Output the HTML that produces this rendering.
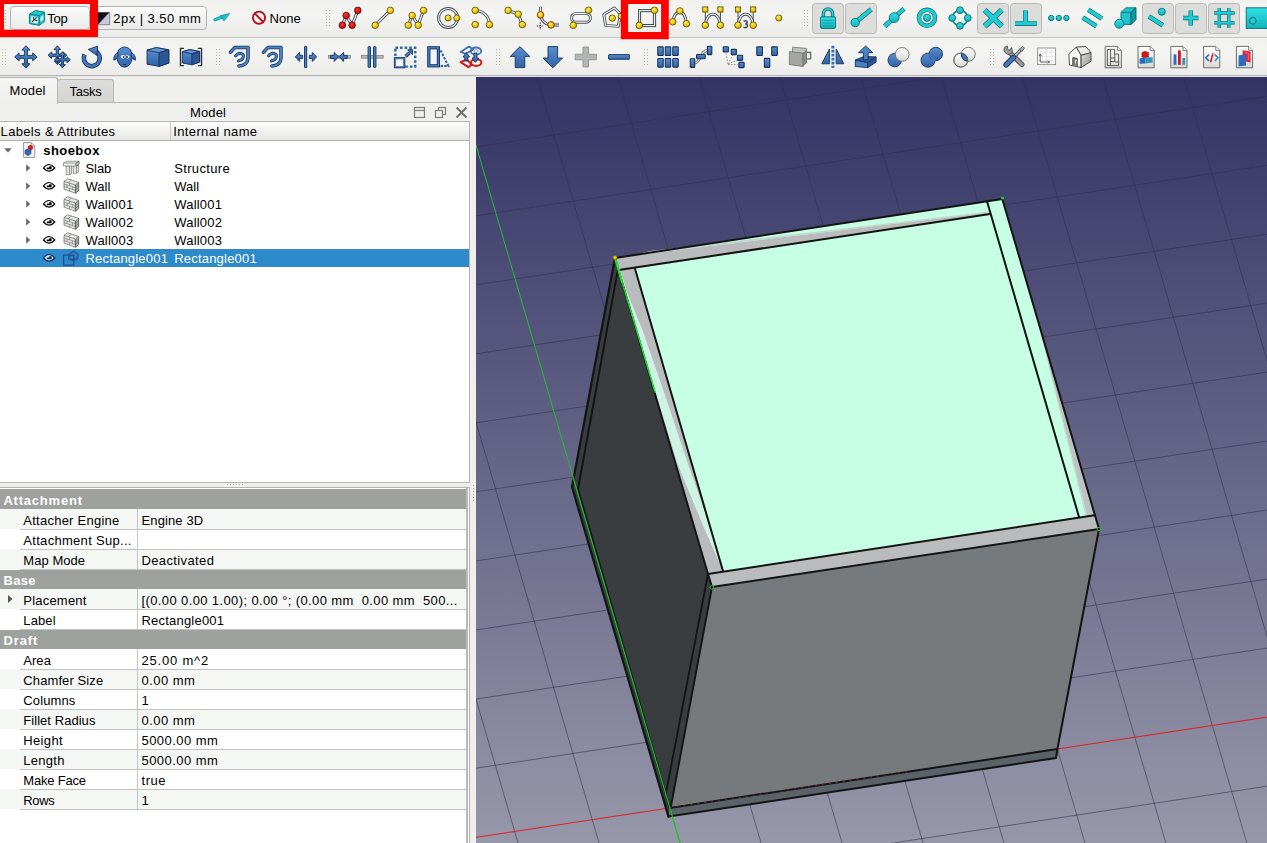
<!DOCTYPE html>
<html><head><meta charset="utf-8"><title>FreeCAD</title>
<style>
html,body{margin:0;padding:0;}
body{width:1267px;height:843px;overflow:hidden;position:relative;background:#eff0ee;font-family:"Liberation Sans",sans-serif;font-size:13px;color:#000;}
.a{position:absolute;}
.t{position:absolute;white-space:pre;line-height:1;height:13px;}
svg{position:absolute;overflow:visible;}

</style></head>
<body>
<div class="a" style="left:0;top:0;width:1267px;height:37px;background:linear-gradient(#f1f2f0,#f4f5f3 40%,#ebece9)"></div>
<div class="a" style="left:0;top:38px;width:1267px;height:37px;background:linear-gradient(#f1f2f0,#f4f5f3 40%,#ebece9)"></div>
<div class="a" style="left:0;top:37px;width:1267px;height:1px;background:#c6c6c4"></div>
<div class="a" style="left:0;top:75px;width:1267px;height:1px;background:#b4b4b2"></div>
<div class="a" style="left:0;top:76px;width:1267px;height:1px;background:#e4e4e2"></div>
<div class="a" style="left:2px;top:10px;width:1px;height:1px;background:#b0b0b0"></div><div class="a" style="left:5px;top:10px;width:1px;height:1px;background:#b0b0b0"></div><div class="a" style="left:2px;top:13px;width:1px;height:1px;background:#b0b0b0"></div><div class="a" style="left:5px;top:13px;width:1px;height:1px;background:#b0b0b0"></div><div class="a" style="left:2px;top:16px;width:1px;height:1px;background:#b0b0b0"></div><div class="a" style="left:5px;top:16px;width:1px;height:1px;background:#b0b0b0"></div><div class="a" style="left:2px;top:19px;width:1px;height:1px;background:#b0b0b0"></div><div class="a" style="left:5px;top:19px;width:1px;height:1px;background:#b0b0b0"></div><div class="a" style="left:2px;top:22px;width:1px;height:1px;background:#b0b0b0"></div><div class="a" style="left:5px;top:22px;width:1px;height:1px;background:#b0b0b0"></div><div class="a" style="left:2px;top:25px;width:1px;height:1px;background:#b0b0b0"></div><div class="a" style="left:5px;top:25px;width:1px;height:1px;background:#b0b0b0"></div>
<div class="a" style="left:326px;top:10px;width:1px;height:1px;background:#b0b0b0"></div><div class="a" style="left:329px;top:10px;width:1px;height:1px;background:#b0b0b0"></div><div class="a" style="left:326px;top:13px;width:1px;height:1px;background:#b0b0b0"></div><div class="a" style="left:329px;top:13px;width:1px;height:1px;background:#b0b0b0"></div><div class="a" style="left:326px;top:16px;width:1px;height:1px;background:#b0b0b0"></div><div class="a" style="left:329px;top:16px;width:1px;height:1px;background:#b0b0b0"></div><div class="a" style="left:326px;top:19px;width:1px;height:1px;background:#b0b0b0"></div><div class="a" style="left:329px;top:19px;width:1px;height:1px;background:#b0b0b0"></div><div class="a" style="left:326px;top:22px;width:1px;height:1px;background:#b0b0b0"></div><div class="a" style="left:329px;top:22px;width:1px;height:1px;background:#b0b0b0"></div><div class="a" style="left:326px;top:25px;width:1px;height:1px;background:#b0b0b0"></div><div class="a" style="left:329px;top:25px;width:1px;height:1px;background:#b0b0b0"></div>
<div class="a" style="left:804px;top:10px;width:1px;height:1px;background:#b0b0b0"></div><div class="a" style="left:807px;top:10px;width:1px;height:1px;background:#b0b0b0"></div><div class="a" style="left:804px;top:13px;width:1px;height:1px;background:#b0b0b0"></div><div class="a" style="left:807px;top:13px;width:1px;height:1px;background:#b0b0b0"></div><div class="a" style="left:804px;top:16px;width:1px;height:1px;background:#b0b0b0"></div><div class="a" style="left:807px;top:16px;width:1px;height:1px;background:#b0b0b0"></div><div class="a" style="left:804px;top:19px;width:1px;height:1px;background:#b0b0b0"></div><div class="a" style="left:807px;top:19px;width:1px;height:1px;background:#b0b0b0"></div><div class="a" style="left:804px;top:22px;width:1px;height:1px;background:#b0b0b0"></div><div class="a" style="left:807px;top:22px;width:1px;height:1px;background:#b0b0b0"></div><div class="a" style="left:804px;top:25px;width:1px;height:1px;background:#b0b0b0"></div><div class="a" style="left:807px;top:25px;width:1px;height:1px;background:#b0b0b0"></div>
<div class="a" style="left:2px;top:49px;width:1px;height:1px;background:#b0b0b0"></div><div class="a" style="left:5px;top:49px;width:1px;height:1px;background:#b0b0b0"></div><div class="a" style="left:2px;top:52px;width:1px;height:1px;background:#b0b0b0"></div><div class="a" style="left:5px;top:52px;width:1px;height:1px;background:#b0b0b0"></div><div class="a" style="left:2px;top:55px;width:1px;height:1px;background:#b0b0b0"></div><div class="a" style="left:5px;top:55px;width:1px;height:1px;background:#b0b0b0"></div><div class="a" style="left:2px;top:58px;width:1px;height:1px;background:#b0b0b0"></div><div class="a" style="left:5px;top:58px;width:1px;height:1px;background:#b0b0b0"></div><div class="a" style="left:2px;top:61px;width:1px;height:1px;background:#b0b0b0"></div><div class="a" style="left:5px;top:61px;width:1px;height:1px;background:#b0b0b0"></div><div class="a" style="left:2px;top:64px;width:1px;height:1px;background:#b0b0b0"></div><div class="a" style="left:5px;top:64px;width:1px;height:1px;background:#b0b0b0"></div>
<div class="a" style="left:216px;top:49px;width:1px;height:1px;background:#b0b0b0"></div><div class="a" style="left:219px;top:49px;width:1px;height:1px;background:#b0b0b0"></div><div class="a" style="left:216px;top:52px;width:1px;height:1px;background:#b0b0b0"></div><div class="a" style="left:219px;top:52px;width:1px;height:1px;background:#b0b0b0"></div><div class="a" style="left:216px;top:55px;width:1px;height:1px;background:#b0b0b0"></div><div class="a" style="left:219px;top:55px;width:1px;height:1px;background:#b0b0b0"></div><div class="a" style="left:216px;top:58px;width:1px;height:1px;background:#b0b0b0"></div><div class="a" style="left:219px;top:58px;width:1px;height:1px;background:#b0b0b0"></div><div class="a" style="left:216px;top:61px;width:1px;height:1px;background:#b0b0b0"></div><div class="a" style="left:219px;top:61px;width:1px;height:1px;background:#b0b0b0"></div><div class="a" style="left:216px;top:64px;width:1px;height:1px;background:#b0b0b0"></div><div class="a" style="left:219px;top:64px;width:1px;height:1px;background:#b0b0b0"></div>
<div class="a" style="left:496px;top:49px;width:1px;height:1px;background:#b0b0b0"></div><div class="a" style="left:499px;top:49px;width:1px;height:1px;background:#b0b0b0"></div><div class="a" style="left:496px;top:52px;width:1px;height:1px;background:#b0b0b0"></div><div class="a" style="left:499px;top:52px;width:1px;height:1px;background:#b0b0b0"></div><div class="a" style="left:496px;top:55px;width:1px;height:1px;background:#b0b0b0"></div><div class="a" style="left:499px;top:55px;width:1px;height:1px;background:#b0b0b0"></div><div class="a" style="left:496px;top:58px;width:1px;height:1px;background:#b0b0b0"></div><div class="a" style="left:499px;top:58px;width:1px;height:1px;background:#b0b0b0"></div><div class="a" style="left:496px;top:61px;width:1px;height:1px;background:#b0b0b0"></div><div class="a" style="left:499px;top:61px;width:1px;height:1px;background:#b0b0b0"></div><div class="a" style="left:496px;top:64px;width:1px;height:1px;background:#b0b0b0"></div><div class="a" style="left:499px;top:64px;width:1px;height:1px;background:#b0b0b0"></div>
<div class="a" style="left:644px;top:49px;width:1px;height:1px;background:#b0b0b0"></div><div class="a" style="left:647px;top:49px;width:1px;height:1px;background:#b0b0b0"></div><div class="a" style="left:644px;top:52px;width:1px;height:1px;background:#b0b0b0"></div><div class="a" style="left:647px;top:52px;width:1px;height:1px;background:#b0b0b0"></div><div class="a" style="left:644px;top:55px;width:1px;height:1px;background:#b0b0b0"></div><div class="a" style="left:647px;top:55px;width:1px;height:1px;background:#b0b0b0"></div><div class="a" style="left:644px;top:58px;width:1px;height:1px;background:#b0b0b0"></div><div class="a" style="left:647px;top:58px;width:1px;height:1px;background:#b0b0b0"></div><div class="a" style="left:644px;top:61px;width:1px;height:1px;background:#b0b0b0"></div><div class="a" style="left:647px;top:61px;width:1px;height:1px;background:#b0b0b0"></div><div class="a" style="left:644px;top:64px;width:1px;height:1px;background:#b0b0b0"></div><div class="a" style="left:647px;top:64px;width:1px;height:1px;background:#b0b0b0"></div>
<div class="a" style="left:990px;top:49px;width:1px;height:1px;background:#b0b0b0"></div><div class="a" style="left:993px;top:49px;width:1px;height:1px;background:#b0b0b0"></div><div class="a" style="left:990px;top:52px;width:1px;height:1px;background:#b0b0b0"></div><div class="a" style="left:993px;top:52px;width:1px;height:1px;background:#b0b0b0"></div><div class="a" style="left:990px;top:55px;width:1px;height:1px;background:#b0b0b0"></div><div class="a" style="left:993px;top:55px;width:1px;height:1px;background:#b0b0b0"></div><div class="a" style="left:990px;top:58px;width:1px;height:1px;background:#b0b0b0"></div><div class="a" style="left:993px;top:58px;width:1px;height:1px;background:#b0b0b0"></div><div class="a" style="left:990px;top:61px;width:1px;height:1px;background:#b0b0b0"></div><div class="a" style="left:993px;top:61px;width:1px;height:1px;background:#b0b0b0"></div><div class="a" style="left:990px;top:64px;width:1px;height:1px;background:#b0b0b0"></div><div class="a" style="left:993px;top:64px;width:1px;height:1px;background:#b0b0b0"></div>
<div class="a" style="left:57px;top:102px;width:413px;height:1px;background:#b8b8b6"></div>
<div class="a" style="left:-1px;top:77px;width:57px;height:26px;border:1px solid #b8b8b6;border-bottom:none;border-radius:0 3px 0 0;background:linear-gradient(#f5f6f4,#eff0ee);box-sizing:content-box"></div>
<div class="a" style="left:57px;top:79px;width:55px;height:22px;border:1px solid #b8b8b6;border-bottom:none;border-radius:3px 3px 0 0;background:linear-gradient(#dcdcda,#d4d4d2);box-sizing:content-box"></div>
<div class="t" style="left:9.5px;top:83.6px;font-size:13px;letter-spacing:0.125px;color:#000;">Model</div>
<div class="t" style="left:69.5px;top:84.5px;font-size:13px;letter-spacing:-0.216px;color:#000;">Tasks</div>
<div class="t" style="left:190.0px;top:105.7px;font-size:13px;letter-spacing:0.125px;color:#000;">Model</div>
<svg style="left:412px;top:105px" width="58" height="16" viewBox="412 105 58 16">
<rect x="414.5" y="107.5" width="10" height="10" fill="none" stroke="#7d7d7d" stroke-width="1.2"/>
<line x1="414.5" y1="110.5" x2="424.5" y2="110.5" stroke="#7d7d7d" stroke-width="1.2"/>
<rect x="438.5" y="107.5" width="7" height="7" fill="none" stroke="#7d7d7d" stroke-width="1.2"/>
<rect x="435.5" y="110.5" width="7" height="7" fill="#efefef" stroke="#7d7d7d" stroke-width="1.2"/>
<path d="M456.5 107.5L466.5 117.5M466.5 107.5L456.5 117.5" stroke="#6e6e6e" stroke-width="1.8"/>
</svg>
<div class="a" style="left:-1px;top:121px;width:469px;height:360px;border:1px solid #b4b4b2;background:#fff;box-sizing:content-box"></div>
<div class="a" style="left:0;top:122px;width:469px;height:18px;background:linear-gradient(#fdfdfd,#e6e6e4);border-bottom:1px solid #b0b0ae"></div>
<div class="a" style="left:170px;top:122px;width:1px;height:18px;background:#c8c8c6"></div>
<div class="t" style="left:0.6px;top:124.7px;font-size:13px;letter-spacing:0.340px;color:#000;">Labels &amp; Attributes</div>
<div class="t" style="left:173.3px;top:124.7px;font-size:13px;letter-spacing:0.356px;color:#000;">Internal name</div>
<div class="a" style="left:0;top:249px;width:469px;height:18px;background:#2d8acb"></div>
<div class="t" style="left:43.2px;top:144.0px;font-size:13px;letter-spacing:0.458px;color:#000;font-weight:bold;">shoebox</div>
<div class="t" style="left:85.4px;top:162.0px;font-size:13px;letter-spacing:-0.023px;color:#000;">Slab</div>
<div class="t" style="left:174.2px;top:162.0px;font-size:13px;letter-spacing:0.344px;color:#000;">Structure</div>
<div class="t" style="left:85.4px;top:180.0px;font-size:13px;letter-spacing:0.078px;color:#000;">Wall</div>
<div class="t" style="left:174.2px;top:180.0px;font-size:13px;letter-spacing:0.078px;color:#000;">Wall</div>
<div class="t" style="left:85.4px;top:198.0px;font-size:13px;letter-spacing:0.219px;color:#000;">Wall001</div>
<div class="t" style="left:174.2px;top:198.0px;font-size:13px;letter-spacing:0.219px;color:#000;">Wall001</div>
<div class="t" style="left:85.4px;top:216.0px;font-size:13px;letter-spacing:0.219px;color:#000;">Wall002</div>
<div class="t" style="left:174.2px;top:216.0px;font-size:13px;letter-spacing:0.219px;color:#000;">Wall002</div>
<div class="t" style="left:85.4px;top:234.0px;font-size:13px;letter-spacing:0.219px;color:#000;">Wall003</div>
<div class="t" style="left:174.2px;top:234.0px;font-size:13px;letter-spacing:0.219px;color:#000;">Wall003</div>
<div class="t" style="left:85.4px;top:252.0px;font-size:13px;letter-spacing:0.206px;color:#fff;">Rectangle001</div>
<div class="t" style="left:174.2px;top:252.0px;font-size:13px;letter-spacing:0.206px;color:#fff;">Rectangle001</div>
<div class="a" style="left:227px;top:484px;width:1px;height:1px;background:#a8a8a8"></div>
<div class="a" style="left:230px;top:484px;width:1px;height:1px;background:#a8a8a8"></div>
<div class="a" style="left:233px;top:484px;width:1px;height:1px;background:#a8a8a8"></div>
<div class="a" style="left:236px;top:484px;width:1px;height:1px;background:#a8a8a8"></div>
<div class="a" style="left:239px;top:484px;width:1px;height:1px;background:#a8a8a8"></div>
<div class="a" style="left:242px;top:484px;width:1px;height:1px;background:#a8a8a8"></div>
<div class="a" style="left:473px;top:485px;width:1px;height:1px;background:#a8a8a8"></div>
<div class="a" style="left:473px;top:488px;width:1px;height:1px;background:#a8a8a8"></div>
<div class="a" style="left:473px;top:491px;width:1px;height:1px;background:#a8a8a8"></div>
<div class="a" style="left:473px;top:494px;width:1px;height:1px;background:#a8a8a8"></div>
<div class="a" style="left:473px;top:497px;width:1px;height:1px;background:#a8a8a8"></div>
<div class="a" style="left:473px;top:500px;width:1px;height:1px;background:#a8a8a8"></div>
<div class="a" style="left:-1px;top:487px;width:469px;height:360px;border:1px solid #b4b4b2;background:#fff;box-sizing:content-box"></div>
<div class="a" style="left:466px;top:488px;width:2px;height:360px;background:#b8bab8"></div>
<div class="a" style="left:468px;top:488px;width:1px;height:360px;background:#fbfbfb"></div>
<div class="a" style="left:0;top:489.0px;width:466px;height:20.0px;background:#9fa19e"></div>
<div class="t" style="left:3.4px;top:494.0px;font-size:13px;letter-spacing:0.791px;color:#fff;font-weight:bold;">Attachment</div>
<div class="a" style="left:0;top:509.0px;width:466px;height:20px;background:#f5f7f5"></div>
<div class="a" style="left:137px;top:509.0px;width:1px;height:20px;background:#c6c6c4"></div>
<div class="t" style="left:23.3px;top:514.0px;font-size:13px;letter-spacing:0.248px;color:#000;">Attacher Engine</div>
<div class="t" style="left:141.5px;top:514.0px;font-size:13px;letter-spacing:0.122px;color:#000;">Engine 3D</div>
<div class="a" style="left:0;top:529.0px;width:466px;height:20px;background:#ffffff"></div>
<div class="a" style="left:137px;top:529.0px;width:1px;height:20px;background:#c6c6c4"></div>
<div class="t" style="left:23.3px;top:534.0px;font-size:13px;letter-spacing:0.301px;color:#000;">Attachment Sup...</div>
<div class="a" style="left:0;top:549.0px;width:466px;height:20px;background:#f5f7f5"></div>
<div class="a" style="left:137px;top:549.0px;width:1px;height:20px;background:#c6c6c4"></div>
<div class="t" style="left:23.3px;top:554.0px;font-size:13px;letter-spacing:0.055px;color:#000;">Map Mode</div>
<div class="t" style="left:141.5px;top:554.0px;font-size:13px;letter-spacing:0.375px;color:#000;">Deactivated</div>
<div class="a" style="left:0;top:570.0px;width:466px;height:19.0px;background:#9fa19e"></div>
<div class="t" style="left:3.4px;top:574.0px;font-size:13px;letter-spacing:0.355px;color:#fff;font-weight:bold;">Base</div>
<div class="a" style="left:0;top:589.0px;width:466px;height:20px;background:#f5f7f5"></div>
<div class="a" style="left:137px;top:589.0px;width:1px;height:20px;background:#c6c6c4"></div>
<div class="t" style="left:23.3px;top:594.0px;font-size:13px;letter-spacing:0.207px;color:#000;">Placement</div>
<div class="t" style="left:141.5px;top:594.0px;font-size:13px;letter-spacing:0.382px;color:#000;">[(0.00 0.00 1.00); 0.00 °; (0.00 mm&nbsp; 0.00 mm&nbsp; 500...</div>
<svg style="left:6px;top:594.0px" width="8" height="10"><path d="M2 1L6.5 5L2 9Z" fill="#555"/></svg>
<div class="a" style="left:0;top:609.0px;width:466px;height:20px;background:#ffffff"></div>
<div class="a" style="left:137px;top:609.0px;width:1px;height:20px;background:#c6c6c4"></div>
<div class="t" style="left:23.3px;top:614.0px;font-size:13px;letter-spacing:0.113px;color:#000;">Label</div>
<div class="t" style="left:141.5px;top:614.0px;font-size:13px;letter-spacing:0.206px;color:#000;">Rectangle001</div>
<div class="a" style="left:0;top:630.0px;width:466px;height:19.0px;background:#9fa19e"></div>
<div class="t" style="left:3.4px;top:634.0px;font-size:13px;letter-spacing:0.919px;color:#fff;font-weight:bold;">Draft</div>
<div class="a" style="left:0;top:649.0px;width:466px;height:20px;background:#ffffff"></div>
<div class="a" style="left:137px;top:649.0px;width:1px;height:20px;background:#c6c6c4"></div>
<div class="t" style="left:23.3px;top:654.0px;font-size:13px;letter-spacing:0.039px;color:#000;">Area</div>
<div class="t" style="left:141.5px;top:654.0px;font-size:13px;letter-spacing:0.807px;color:#000;">25.00 m^2</div>
<div class="a" style="left:0;top:669.0px;width:466px;height:20px;background:#f5f7f5"></div>
<div class="a" style="left:137px;top:669.0px;width:1px;height:20px;background:#c6c6c4"></div>
<div class="t" style="left:23.3px;top:674.0px;font-size:13px;letter-spacing:0.105px;color:#000;">Chamfer Size</div>
<div class="t" style="left:141.5px;top:674.0px;font-size:13px;letter-spacing:0.478px;color:#000;">0.00 mm</div>
<div class="a" style="left:0;top:689.0px;width:466px;height:20px;background:#ffffff"></div>
<div class="a" style="left:137px;top:689.0px;width:1px;height:20px;background:#c6c6c4"></div>
<div class="t" style="left:23.3px;top:694.0px;font-size:13px;letter-spacing:0.127px;color:#000;">Columns</div>
<div class="t" style="left:141.5px;top:694.0px;font-size:13px;letter-spacing:0.406px;color:#000;">1</div>
<div class="a" style="left:0;top:709.0px;width:466px;height:20px;background:#f5f7f5"></div>
<div class="a" style="left:137px;top:709.0px;width:1px;height:20px;background:#c6c6c4"></div>
<div class="t" style="left:23.3px;top:714.0px;font-size:13px;letter-spacing:0.048px;color:#000;">Fillet Radius</div>
<div class="t" style="left:141.5px;top:714.0px;font-size:13px;letter-spacing:0.478px;color:#000;">0.00 mm</div>
<div class="a" style="left:0;top:729.0px;width:466px;height:20px;background:#ffffff"></div>
<div class="a" style="left:137px;top:729.0px;width:1px;height:20px;background:#c6c6c4"></div>
<div class="t" style="left:23.3px;top:734.0px;font-size:13px;letter-spacing:0.349px;color:#000;">Height</div>
<div class="t" style="left:141.5px;top:734.0px;font-size:13px;letter-spacing:0.456px;color:#000;">5000.00 mm</div>
<div class="a" style="left:0;top:749.0px;width:466px;height:20px;background:#f5f7f5"></div>
<div class="a" style="left:137px;top:749.0px;width:1px;height:20px;background:#c6c6c4"></div>
<div class="t" style="left:23.3px;top:754.0px;font-size:13px;letter-spacing:0.273px;color:#000;">Length</div>
<div class="t" style="left:141.5px;top:754.0px;font-size:13px;letter-spacing:0.456px;color:#000;">5000.00 mm</div>
<div class="a" style="left:0;top:769.0px;width:466px;height:20px;background:#ffffff"></div>
<div class="a" style="left:137px;top:769.0px;width:1px;height:20px;background:#c6c6c4"></div>
<div class="t" style="left:23.3px;top:774.0px;font-size:13px;letter-spacing:-0.189px;color:#000;">Make Face</div>
<div class="t" style="left:141.5px;top:774.0px;font-size:13px;letter-spacing:0.559px;color:#000;">true</div>
<div class="a" style="left:0;top:789.0px;width:466px;height:20px;background:#f5f7f5"></div>
<div class="a" style="left:137px;top:789.0px;width:1px;height:20px;background:#c6c6c4"></div>
<div class="t" style="left:23.3px;top:794.0px;font-size:13px;letter-spacing:-0.324px;color:#000;">Rows</div>
<div class="t" style="left:141.5px;top:794.0px;font-size:13px;letter-spacing:0.406px;color:#000;">1</div>
<div class="a" style="left:20px;top:529.0px;width:446px;height:1px;background:#c2c2c0"></div>
<div class="a" style="left:20px;top:549.0px;width:446px;height:1px;background:#c2c2c0"></div>
<div class="a" style="left:20px;top:569.0px;width:446px;height:1px;background:#c2c2c0"></div>
<div class="a" style="left:20px;top:609.0px;width:446px;height:1px;background:#c2c2c0"></div>
<div class="a" style="left:20px;top:629.0px;width:446px;height:1px;background:#c2c2c0"></div>
<div class="a" style="left:20px;top:669.0px;width:446px;height:1px;background:#c2c2c0"></div>
<div class="a" style="left:20px;top:689.0px;width:446px;height:1px;background:#c2c2c0"></div>
<div class="a" style="left:20px;top:709.0px;width:446px;height:1px;background:#c2c2c0"></div>
<div class="a" style="left:20px;top:729.0px;width:446px;height:1px;background:#c2c2c0"></div>
<div class="a" style="left:20px;top:749.0px;width:446px;height:1px;background:#c2c2c0"></div>
<div class="a" style="left:20px;top:769.0px;width:446px;height:1px;background:#c2c2c0"></div>
<div class="a" style="left:20px;top:789.0px;width:446px;height:1px;background:#c2c2c0"></div>
<div class="a" style="left:20px;top:809.0px;width:446px;height:1px;background:#c2c2c0"></div>
<svg style="left:0;top:141px" width="120" height="130" viewBox="0 141 120 130">
<path d="M4.2 148.2H11.8L8 152.4Z" fill="#6a6a6a"/>
<path d="M23.6 142.6H31.4L34.8 146V157.4H23.6Z" fill="#f6f6f4" stroke="#8a8c8a" stroke-width="0.9" stroke-linejoin="round"/><path d="M31.4 142.6V146H34.8" fill="#e4e4e2" stroke="#8a8c8a" stroke-width="0.7"/>
<circle cx="30.4" cy="147.6" r="2.6" fill="#e01b24"/><path d="M25 150.2L28.2 148.6L31 150V153.8L28 155.6L25 154Z" fill="#3a6fb4" stroke="#1e4a86" stroke-width="0.6"/><path d="M25 150.2L28 151.6L31 150M28 151.6V155.6" stroke="#1e4a86" stroke-width="0.5" fill="none"/>
<path d="M26.2 164.2L30.2 168L26.2 171.8Z" fill="#6a6a6a"/>
<path d="M43.4 168Q49 161 54.8 168Q49 174.4 43.4 168Z" fill="#fff" stroke="#000" stroke-width="1.2" stroke-linejoin="round"/><path d="M46.8 169.2H51.6V166.2H49.2V167.4H46.8Z" fill="#000"/>
<g stroke="#6a6c6a" stroke-width="0.65" stroke-linejoin="round"><path d="M66.2 166H69.6L71.6 165.4V173.6L69.6 174.8H66.2Z" fill="#e2e4e2"/><path d="M69.6 166V174.8" fill="none"/><path d="M73.2 165.6H76.6L78.6 165V172L76.6 173.2H73.2Z" fill="#e2e4e2"/><path d="M76.6 165.6V173.2" fill="none"/><path d="M63.4 163L66.6 161.2L79 161.2V164L76 166H63.4Z" fill="#f0f2f0"/><path d="M63.4 163H76V166M76 163L79 161.2" fill="none"/><path d="M76 163L79 161.2V164L76 166Z" fill="#b8bab8"/></g>
<path d="M26.2 182.2L30.2 186L26.2 189.8Z" fill="#6a6a6a"/>
<path d="M43.4 186Q49 179 54.8 186Q49 192.4 43.4 186Z" fill="#fff" stroke="#000" stroke-width="1.2" stroke-linejoin="round"/><path d="M46.8 187.2H51.6V184.2H49.2V185.4H46.8Z" fill="#000"/>
<g stroke="#585a58" stroke-width="0.65" stroke-linejoin="round"><path d="M64 181.4L67.6 178.8L78.6 182.4L78.6 190.6L75.4 193.2L64 189.2Z" fill="#e6e8e6"/><path d="M75.4 185L78.6 182.4V190.6L75.4 193.2Z" fill="#aeb0ae"/><path d="M64 181.4L75.4 185V193.2" fill="none"/><path d="M64 184L75.4 187.7M64 186.6L75.4 190.4M69.6 183.2V185.8M67 185V187.6M72.4 186.8V189.4M69.6 188.4V191M75.4 187.7L78.6 185.1M75.4 190.4L78.6 187.8M71.4 180L68.2 182.8" fill="none" stroke-width="0.55"/></g>
<path d="M26.2 200.2L30.2 204L26.2 207.8Z" fill="#6a6a6a"/>
<path d="M43.4 204Q49 197 54.8 204Q49 210.4 43.4 204Z" fill="#fff" stroke="#000" stroke-width="1.2" stroke-linejoin="round"/><path d="M46.8 205.2H51.6V202.2H49.2V203.4H46.8Z" fill="#000"/>
<g stroke="#585a58" stroke-width="0.65" stroke-linejoin="round"><path d="M64 199.4L67.6 196.8L78.6 200.4L78.6 208.6L75.4 211.2L64 207.2Z" fill="#e6e8e6"/><path d="M75.4 203L78.6 200.4V208.6L75.4 211.2Z" fill="#aeb0ae"/><path d="M64 199.4L75.4 203V211.2" fill="none"/><path d="M64 202L75.4 205.7M64 204.6L75.4 208.4M69.6 201.2V203.8M67 203V205.6M72.4 204.8V207.4M69.6 206.4V209M75.4 205.7L78.6 203.1M75.4 208.4L78.6 205.8M71.4 198L68.2 200.8" fill="none" stroke-width="0.55"/></g>
<path d="M26.2 218.2L30.2 222L26.2 225.8Z" fill="#6a6a6a"/>
<path d="M43.4 222Q49 215 54.8 222Q49 228.4 43.4 222Z" fill="#fff" stroke="#000" stroke-width="1.2" stroke-linejoin="round"/><path d="M46.8 223.2H51.6V220.2H49.2V221.4H46.8Z" fill="#000"/>
<g stroke="#585a58" stroke-width="0.65" stroke-linejoin="round"><path d="M64 217.4L67.6 214.8L78.6 218.4L78.6 226.6L75.4 229.2L64 225.2Z" fill="#e6e8e6"/><path d="M75.4 221L78.6 218.4V226.6L75.4 229.2Z" fill="#aeb0ae"/><path d="M64 217.4L75.4 221V229.2" fill="none"/><path d="M64 220L75.4 223.7M64 222.6L75.4 226.4M69.6 219.2V221.8M67 221V223.6M72.4 222.8V225.4M69.6 224.4V227M75.4 223.7L78.6 221.1M75.4 226.4L78.6 223.8M71.4 216L68.2 218.8" fill="none" stroke-width="0.55"/></g>
<path d="M26.2 236.2L30.2 240L26.2 243.8Z" fill="#6a6a6a"/>
<path d="M43.4 240Q49 233 54.8 240Q49 246.4 43.4 240Z" fill="#fff" stroke="#000" stroke-width="1.2" stroke-linejoin="round"/><path d="M46.8 241.2H51.6V238.2H49.2V239.4H46.8Z" fill="#000"/>
<g stroke="#585a58" stroke-width="0.65" stroke-linejoin="round"><path d="M64 235.4L67.6 232.8L78.6 236.4L78.6 244.6L75.4 247.2L64 243.2Z" fill="#e6e8e6"/><path d="M75.4 239L78.6 236.4V244.6L75.4 247.2Z" fill="#aeb0ae"/><path d="M64 235.4L75.4 239V247.2" fill="none"/><path d="M64 238L75.4 241.7M64 240.6L75.4 244.4M69.6 237.2V239.8M67 239V241.6M72.4 240.8V243.4M69.6 242.4V245M75.4 241.7L78.6 239.1M75.4 244.4L78.6 241.8M71.4 234L68.2 236.8" fill="none" stroke-width="0.55"/></g>
<path d="M43.4 258Q49 251 54.8 258Q49 264.4 43.4 258Z" fill="#cfe6f8" stroke="#0c2a52" stroke-width="1.2" stroke-linejoin="round"/><path d="M46.8 259.2H51.6V256.2H49.2V257.4H46.8Z" fill="#0c2a52"/>
<path d="M68.2 254.6L73.8 250.6L78.6 254.2L77.4 259.6L72 260.4Z" fill="none" stroke="#244e94" stroke-width="0.9"/><path d="M69.4 254.8L73.8 251.8L77.4 254.6L76.4 258.6L72.2 259.2" fill="none" stroke="#244e94" stroke-width="0.7"/>
<rect x="63.6" y="255.2" width="10.2" height="10" fill="none" stroke="#244e94" stroke-width="1.3"/><rect x="68.8" y="255.8" width="5" height="4" fill="none" stroke="#244e94" stroke-width="1"/>
</svg>
<svg style="left:476px;top:77px;overflow:hidden" width="791" height="766" viewBox="476 77 791 766">
<defs><linearGradient id="bg" x1="0" y1="0" x2="0" y2="1"><stop offset="0" stop-color="#333365"/><stop offset="1" stop-color="#9797aa"/></linearGradient></defs>
<rect x="476" y="77" width="791" height="766" fill="url(#bg)"/>
<path d="M-264.3 1781.8L2837.5 1306.5M-107.9 1480.3L-685.5 -505.4M-283.6 1715.3L2818.0 1240.4M-30.1 1468.4L-607.8 -517.1M-302.9 1648.8L2798.4 1174.3M47.7 1456.5L-530.2 -528.7M-322.2 1582.4L2778.9 1108.2M125.5 1444.6L-452.6 -540.3M-341.5 1516.0L2759.4 1042.2M203.3 1432.7L-375.0 -551.9M-360.8 1449.5L2739.8 976.1M281.0 1420.8L-297.4 -563.5M-380.1 1383.1L2720.3 910.1M358.7 1409.0L-219.9 -575.1M-399.4 1316.7L2700.8 844.0M436.4 1397.1L-142.3 -586.7M-418.6 1250.4L2681.3 778.0M514.1 1385.2L-64.8 -598.3M-437.9 1184.0L2661.8 712.0M591.8 1373.4L12.7 -609.9M-457.2 1117.7L2642.3 646.0M669.5 1361.5L90.2 -621.5M-476.5 1051.3L2622.8 580.0M747.1 1349.6L167.6 -633.1M-515.0 918.7L2583.8 448.1M902.3 1325.9L322.5 -656.3M-534.2 852.4L2564.3 382.2M979.9 1314.1L399.9 -667.9M-553.5 786.1L2544.8 316.3M1057.5 1302.2L477.3 -679.5M-572.7 719.9L2525.3 250.4M1135.0 1290.4L554.7 -691.1M-592.0 653.6L2505.9 184.5M1212.6 1278.5L632.0 -702.6M-611.2 587.4L2486.4 118.6M1290.1 1266.7L709.4 -714.2M-630.5 521.2L2466.9 52.7M1367.6 1254.8L786.7 -725.8M-649.7 454.9L2447.5 -13.1M1445.0 1243.0L864.0 -737.4M-668.9 388.8L2428.0 -79.0M1522.5 1231.2L941.3 -748.9M-688.1 322.6L2408.6 -144.8M1599.9 1219.3L1018.5 -760.5M-707.4 256.4L2389.1 -210.6M1677.4 1207.5L1095.8 -772.1M-726.6 190.2L2369.7 -276.4M1754.8 1195.7L1173.0 -783.6M-745.8 124.1L2350.2 -342.2M1832.1 1183.8L1250.2 -795.2M-765.0 58.0L2330.8 -408.0M1909.5 1172.0L1327.4 -806.7M-784.2 -8.1L2311.3 -473.7M1986.9 1160.2L1404.6 -818.3M-803.4 -74.2L2291.9 -539.5M2064.2 1148.4L1481.8 -829.8M-822.6 -140.3L2272.5 -605.2M2141.5 1136.6L1558.9 -841.4M-841.8 -206.4L2253.1 -670.9M2218.8 1124.8L1636.0 -852.9M-861.0 -272.5L2233.6 -736.6M2296.1 1113.0L1713.1 -864.5M-880.2 -338.5L2214.2 -802.3M2373.3 1101.1L1790.2 -876.0M-899.4 -404.5L2194.8 -868.0M2450.6 1089.3L1867.3 -887.5" stroke="#30304e" stroke-opacity="0.56" stroke-width="1" fill="none"/>
<path d="M-495.7 985.0L2603.3 514.1" stroke="#e02020" stroke-width="1" fill="none"/>
<path d="M824.7 1337.8L245.1 -644.7" stroke="#20c030" stroke-width="1" fill="none"/>
<polygon points="615.0,258.0 572.0,487.0 668.5,816.6 669.8,807.9 671.3,806.3 712.0,587.0 708.0,574.0" fill="#3a3d40" stroke="none" stroke-width="0" stroke-linejoin="round" />
<polygon points="712.0,587.0 1099.0,529.0 1057.4,749.0 671.3,806.5" fill="#767a7c" stroke="none" stroke-width="0" stroke-linejoin="round" />
<polygon points="669.8,807.9 1057.4,749.0 1056.0,758.0 668.5,816.6" fill="#5c626a" stroke="none" stroke-width="0" stroke-linejoin="round" />
<polygon points="615.0,258.0 1002.3,199.0 1099.0,529.0 712.0,587.0" fill="#c7ffe4" stroke="none" stroke-width="0" stroke-linejoin="round" />
<polygon points="708.0,574.0 1094.5,515.3 1099.0,529.0 712.0,587.0" fill="#b9bbbd" stroke="none" stroke-width="0" stroke-linejoin="round" />
<polygon points="620.4,269.8 635.0,268.7 723.0,571.0 708.0,574.0" fill="#b9bbbd" stroke="none" stroke-width="0" stroke-linejoin="round" />
<polygon points="615.0,258.0 632.0,255.4 989.0,212.6 990.0,214.0 635.0,268.7 620.4,269.8" fill="#b9bbbd" stroke="none" stroke-width="0" stroke-linejoin="round" />
<polygon points="632.0,255.4 989.0,212.6 989.0,211.6 650.0,251.0" fill="#c2d6cf" stroke="none" stroke-width="0" stroke-linejoin="round" />
<polygon points="622.0,269.6 700.0,257.7 640.0,268.0" fill="#d4e6de" stroke="none" stroke-width="0" stroke-linejoin="round" />
<polygon points="1036.0,315.0 1094.5,515.3 1087.2,516.4" fill="#bdc2c3" stroke="none" stroke-width="0" stroke-linejoin="round" />
<polygon points="1036.0,315.0 1087.2,516.4 1085.6,516.6" fill="#c2d9d1" stroke="none" stroke-width="0" stroke-linejoin="round" />
<polygon points="621.5,279.0 658.2,401.0 677.6,464.0 704.0,528.0 719.5,563.0 710.3,527.0 688.0,464.0 666.7,400.0 642.5,330.0" fill="#cdf3e3" stroke="none" stroke-width="0" stroke-linejoin="round" />
<polyline points="615.0,258.0 1002.3,199.0 1099.0,529.0 712.0,587.0" fill="none" stroke="#141414" stroke-width="2" stroke-linecap="round" stroke-linejoin="round" />
<polyline points="615.0,258.0 708.0,574.0" fill="none" stroke="#141414" stroke-width="2" stroke-linecap="round" stroke-linejoin="round" />
<polyline points="708.0,574.0 712.0,587.0" fill="none" stroke="#141414" stroke-width="2" stroke-linecap="round" stroke-linejoin="round" />
<polyline points="620.4,269.8 990.0,214.0" fill="none" stroke="#141414" stroke-width="2" stroke-linecap="round" stroke-linejoin="round" />
<polyline points="987.0,201.3 1079.0,517.0" fill="none" stroke="#141414" stroke-width="2" stroke-linecap="round" stroke-linejoin="round" />
<polyline points="635.0,268.7 723.0,571.0" fill="none" stroke="#141414" stroke-width="2" stroke-linecap="round" stroke-linejoin="round" />
<polyline points="708.0,574.0 1094.5,515.3" fill="none" stroke="#141414" stroke-width="2" stroke-linecap="round" stroke-linejoin="round" />
<polyline points="615.0,258.0 572.0,487.0 668.5,816.6" fill="none" stroke="#141414" stroke-width="2.2" stroke-linecap="round" stroke-linejoin="round" />
<polyline points="617.5,271.6 578.0,489.0 669.8,807.9" fill="none" stroke="#141414" stroke-width="2" stroke-linecap="round" stroke-linejoin="round" />
<polyline points="708.0,574.0 665.8,794.0" fill="none" stroke="#141414" stroke-width="1.8" stroke-linecap="round" stroke-linejoin="round" />
<polyline points="712.0,587.0 671.0,806.0" fill="none" stroke="#141414" stroke-width="1.9" stroke-linecap="round" stroke-linejoin="round" />
<polyline points="1099.0,529.0 1057.4,749.0 1056.0,758.0 668.5,816.6" fill="none" stroke="#141414" stroke-width="2" stroke-linecap="round" stroke-linejoin="round" />
<polyline points="669.8,807.9 1057.4,749.0" fill="none" stroke="#141414" stroke-width="2" stroke-linecap="round" stroke-linejoin="round" />
<polyline points="669.8,807.9 910.0,771.3" fill="none" stroke="#b83030" stroke-width="0.9"  stroke-linejoin="round" stroke-dasharray="1.6 5.4" stroke-opacity="0.8" stroke-linecap="butt"/>
<polyline points="572.5,475.2 669.8,807.9 681.4,847.6" fill="none" stroke="#20c030" stroke-width="1.2" stroke-linecap="round" stroke-linejoin="round" />
<polyline points="615.0,258.0 655.0,392.0" fill="none" stroke="#22dd33" stroke-width="1.6" stroke-linecap="round" stroke-linejoin="round" stroke-dasharray="3 1.5"/>
<polyline points="615.0,258.0 622.0,282.0" fill="none" stroke="#22dd33" stroke-width="2" stroke-linecap="round" stroke-linejoin="round" />
<circle cx="615" cy="257.5" r="2" fill="#f0c800" stroke="#7a6a00" stroke-width="0.6"/>
<circle cx="1002.5999999999999" cy="198" r="1.6" fill="#20d030"/>
<circle cx="1099" cy="529" r="1.8" fill="none" stroke="#20c030" stroke-width="1"/>
<circle cx="711.7" cy="587.4" r="1.8" fill="none" stroke="#20c030" stroke-width="1"/>
</svg>
<svg style="left:0;top:0" width="1267" height="76" viewBox="0 0 1267 76">
<defs>
<radialGradient id="yg" cx="0.4" cy="0.35" r="0.7"><stop offset="0" stop-color="#fff06a"/><stop offset="0.55" stop-color="#ecc80e"/><stop offset="1" stop-color="#c4a000"/></radialGradient>
<radialGradient id="rg" cx="0.4" cy="0.35" r="0.7"><stop offset="0" stop-color="#f63a3a"/><stop offset="1" stop-color="#c00000"/></radialGradient>
<linearGradient id="tg" x1="0" y1="0" x2="0" y2="1"><stop offset="0" stop-color="#30dfe4"/><stop offset="1" stop-color="#12b4bc"/></linearGradient>
<linearGradient id="bl" x1="0" y1="0" x2="0" y2="1"><stop offset="0" stop-color="#5a8fd0"/><stop offset="1" stop-color="#2f62a6"/></linearGradient>
<linearGradient id="btn" x1="0" y1="0" x2="0" y2="1"><stop offset="0" stop-color="#fbfbfb"/><stop offset="1" stop-color="#e9e9e7"/></linearGradient>
<linearGradient id="docg" x1="0" y1="0" x2="0" y2="1"><stop offset="0" stop-color="#ffffff"/><stop offset="1" stop-color="#d8d8d6"/></linearGradient>
</defs>
<rect x="10.5" y="6.5" width="79" height="23" rx="3" fill="url(#btn)" stroke="#b2b2b0"/>
<g stroke="#0c7e86" stroke-width="1" stroke-linejoin="round">
<path d="M29.4 14.2L35.4 10.5L44.6 12.2V21.2L39.2 25.4L29.4 23.6Z" fill="#22c8d0"/>
<path d="M29.4 14.2L39.2 15.6L44.6 12.2M39.2 15.6V25.4" fill="none"/>
</g>
<path d="M31.3 16.3L37.7 17.2V23.4L31.3 22.4Z" fill="#fafafa"/>
<path d="M40.6 17.2L43.2 15.2V19.6L40.6 21.8Z" fill="#eefafa"/>
<path d="M32.4 21.6Q33.6 20.6 34.4 19.4L33.4 17.6M34.4 19.4L36.8 20.8M35.6 18.2L36.6 17.8" stroke="#1a2a2a" stroke-width="1.2" fill="none" stroke-linecap="round"/>
<rect x="90.5" y="6.5" width="116" height="23" rx="3" fill="url(#btn)" stroke="#b2b2b0"/>
<path d="M98 12.2H109.7L98 24.7Z" fill="#111"/><path d="M109.7 12.2V24.7H98Z" fill="#c6cadc" stroke="#6a6e80" stroke-width="0.8"/>
<path d="M215 19.7L222.4 16.8" stroke="#0d8f98" stroke-width="3.2" stroke-linecap="round"/><path d="M215 19.7L222.4 16.8" stroke="#22c6cf" stroke-width="2" stroke-linecap="round"/><path d="M220.6 15.6L229.6 13.6L224 20.9Z" fill="#1fc0c9" stroke="#0d8f98" stroke-width="0.8" stroke-linejoin="round"/>
<circle cx="259" cy="17.7" r="6.1" fill="none" stroke="#b8101a" stroke-width="1.9"/><path d="M254.7 13.4L263.3 22" stroke="#b8101a" stroke-width="1.9"/>
<path d="M342.4 25.2L346.2 15.5L352.1 25.2L357.8 10.4" fill="none" stroke="#414a54" stroke-width="3.0" stroke-linecap="butt" stroke-linejoin="round"/><path d="M342.4 25.2L346.2 15.5L352.1 25.2L357.8 10.4" fill="none" stroke="#f6f6f4" stroke-width="1.3" stroke-linecap="butt" stroke-linejoin="round"/>
<circle cx="357.8" cy="10.4" r="3.3" fill="url(#rg)" stroke="#5a0000" stroke-width="0.8"/>
<circle cx="346.2" cy="15.5" r="3.3" fill="url(#rg)" stroke="#5a0000" stroke-width="0.8"/>
<circle cx="342.4" cy="25.2" r="3.3" fill="url(#rg)" stroke="#5a0000" stroke-width="0.8"/>
<circle cx="352.1" cy="25.2" r="3.3" fill="url(#rg)" stroke="#5a0000" stroke-width="0.8"/>
<path d="M375.2 25.2L390.3 10.4" fill="none" stroke="#414a54" stroke-width="3.0" stroke-linecap="butt" stroke-linejoin="round"/><path d="M375.2 25.2L390.3 10.4" fill="none" stroke="#f6f6f4" stroke-width="1.3" stroke-linecap="butt" stroke-linejoin="round"/>
<circle cx="390.3" cy="10.4" r="3.3" fill="url(#yg)" stroke="#5c4c00" stroke-width="0.8"/>
<circle cx="375.2" cy="25.2" r="3.3" fill="url(#yg)" stroke="#5c4c00" stroke-width="0.8"/>
<path d="M408.3 25.2L412.1 15.5L418.2 25.2L423.5 10.4" fill="none" stroke="#414a54" stroke-width="3.0" stroke-linecap="butt" stroke-linejoin="round"/><path d="M408.3 25.2L412.1 15.5L418.2 25.2L423.5 10.4" fill="none" stroke="#f6f6f4" stroke-width="1.3" stroke-linecap="butt" stroke-linejoin="round"/>
<circle cx="423.5" cy="10.4" r="3.3" fill="url(#yg)" stroke="#5c4c00" stroke-width="0.8"/>
<circle cx="412.1" cy="15.5" r="3.3" fill="url(#yg)" stroke="#5c4c00" stroke-width="0.8"/>
<circle cx="408.3" cy="25.2" r="3.3" fill="url(#yg)" stroke="#5c4c00" stroke-width="0.8"/>
<circle cx="418.2" cy="25.2" r="3.3" fill="url(#yg)" stroke="#5c4c00" stroke-width="0.8"/>
<circle cx="448.1" cy="18" r="9.5" fill="none" stroke="#414a54" stroke-width="3"/><circle cx="448.1" cy="18" r="9.5" fill="none" stroke="#f4f4f2" stroke-width="1.2"/>
<circle cx="448.1" cy="18" r="3.1" fill="url(#yg)" stroke="#5c4c00" stroke-width="0.8"/>
<circle cx="456.8" cy="18" r="3.1" fill="url(#yg)" stroke="#5c4c00" stroke-width="0.8"/>
<path d="M475.2 10.4A14.2 14.2 0 0 1 489.4 24.6" fill="none" stroke="#414a54" stroke-width="3.0" stroke-linecap="butt" stroke-linejoin="round"/><path d="M475.2 10.4A14.2 14.2 0 0 1 489.4 24.6" fill="none" stroke="#f6f6f4" stroke-width="1.3" stroke-linecap="butt" stroke-linejoin="round"/>
<circle cx="475.2" cy="10.4" r="3.3" fill="url(#yg)" stroke="#5c4c00" stroke-width="0.8"/>
<circle cx="475.2" cy="24.6" r="3.3" fill="url(#yg)" stroke="#5c4c00" stroke-width="0.8"/>
<circle cx="489.4" cy="24.6" r="3.3" fill="url(#yg)" stroke="#5c4c00" stroke-width="0.8"/>
<path d="M508.1 10.4L518.2 14.2L522.3 24.6" fill="none" stroke="#414a54" stroke-width="3.0" stroke-linecap="butt" stroke-linejoin="round"/><path d="M508.1 10.4L518.2 14.2L522.3 24.6" fill="none" stroke="#f6f6f4" stroke-width="1.3" stroke-linecap="butt" stroke-linejoin="round"/>
<circle cx="508.1" cy="10.4" r="3.3" fill="url(#yg)" stroke="#5c4c00" stroke-width="0.8"/>
<circle cx="518.2" cy="14.2" r="3.3" fill="url(#yg)" stroke="#5c4c00" stroke-width="0.8"/>
<circle cx="522.3" cy="24.6" r="3.3" fill="url(#yg)" stroke="#5c4c00" stroke-width="0.8"/>
<path d="M540.6 6.8V14.8Q541.6 23.8 551 25H559" fill="none" stroke="#414a54" stroke-width="2.9" stroke-linecap="butt" stroke-linejoin="round"/><path d="M540.6 6.8V14.8Q541.6 23.8 551 25H559" fill="none" stroke="#f6f6f4" stroke-width="1.2" stroke-linecap="butt" stroke-linejoin="round"/>
<path d="M540.2 22.4V29.4M536.8 26H543.8" stroke="#333" stroke-width="1.2" stroke-dasharray="1.4 0.9"/>
<circle cx="540.5" cy="14.9" r="3.3" fill="url(#yg)" stroke="#8a2a10" stroke-width="0.9"/><circle cx="551" cy="24.9" r="3.3" fill="url(#yg)" stroke="#8a2a10" stroke-width="0.9"/>
<rect x="571.6" y="13.6" width="18.8" height="8.6" rx="4.3" fill="none" stroke="#414a54" stroke-width="2.9"/><rect x="571.6" y="13.6" width="18.8" height="8.6" rx="4.3" fill="none" stroke="#f6f6f4" stroke-width="1.2"/>
<circle cx="588.5" cy="10.3" r="3.3" fill="url(#yg)" stroke="#5c4c00" stroke-width="0.8"/>
<circle cx="573.3" cy="25.3" r="3.3" fill="url(#yg)" stroke="#5c4c00" stroke-width="0.8"/>
<path d="M614.3 8L620.6 14.2L618.2 26.4L605.6 25.4L603.8 14.4Z" fill="none" stroke="#414a54" stroke-width="2.9" stroke-linecap="butt" stroke-linejoin="round"/><path d="M614.3 8L620.6 14.2L618.2 26.4L605.6 25.4L603.8 14.4Z" fill="none" stroke="#f6f6f4" stroke-width="1.2" stroke-linecap="butt" stroke-linejoin="round"/>
<circle cx="612.3" cy="18.1" r="3.2" fill="url(#yg)" stroke="#5c4c00" stroke-width="0.8"/>
<circle cx="621.2" cy="16.2" r="3.1" fill="url(#yg)" stroke="#5c4c00" stroke-width="0.8"/>
<rect x="638.6" y="9.6" width="17" height="17" fill="none" stroke="#414a54" stroke-width="1"/><rect x="640.6" y="11.7" width="12.8" height="12.8" fill="none" stroke="#414a54" stroke-width="1"/>
<circle cx="654.5" cy="10.3" r="3.3" fill="url(#yg)" stroke="#5c4c00" stroke-width="0.8"/>
<circle cx="639.3" cy="25.4" r="3.3" fill="url(#yg)" stroke="#5c4c00" stroke-width="0.8"/>
<path d="M672.7 21.8Q674 13.4 679.9 11Q685.5 13.4 686.5 23.7" fill="none" stroke="#414a54" stroke-width="3.0" stroke-linecap="butt" stroke-linejoin="round"/><path d="M672.7 21.8Q674 13.4 679.9 11Q685.5 13.4 686.5 23.7" fill="none" stroke="#f6f6f4" stroke-width="1.3" stroke-linecap="butt" stroke-linejoin="round"/>
<circle cx="679.9" cy="11" r="3.3" fill="url(#yg)" stroke="#5c4c00" stroke-width="0.8"/>
<circle cx="672.7" cy="21.8" r="3.3" fill="url(#yg)" stroke="#5c4c00" stroke-width="0.8"/>
<circle cx="686.5" cy="23.7" r="3.3" fill="url(#yg)" stroke="#5c4c00" stroke-width="0.8"/>
<path d="M705.3 9.5V25.2M720.4 9.5V25.2" stroke="#414a54" stroke-width="1"/>
<path d="M705.3 25.2C706.5 10.5 719.2 10.5 720.4 25.2" fill="none" stroke="#414a54" stroke-width="3.0" stroke-linecap="butt" stroke-linejoin="round"/><path d="M705.3 25.2C706.5 10.5 719.2 10.5 720.4 25.2" fill="none" stroke="#f6f6f4" stroke-width="1.3" stroke-linecap="butt" stroke-linejoin="round"/>
<rect x="702.6999999999999" y="6.9" width="5.2" height="5.2" fill="url(#yg)" stroke="#5c4c00" stroke-width="0.8"/>
<rect x="717.8" y="6.9" width="5.2" height="5.2" fill="url(#yg)" stroke="#5c4c00" stroke-width="0.8"/>
<circle cx="705.3" cy="25.2" r="3.3" fill="url(#yg)" stroke="#5c4c00" stroke-width="0.8"/>
<circle cx="720.4" cy="25.2" r="3.3" fill="url(#yg)" stroke="#5c4c00" stroke-width="0.8"/>
<path d="M738 9.5V25.2M753.2 9.5V25.2" stroke="#414a54" stroke-width="1"/>
<path d="M738 25.2C739.2 10.5 752 10.5 753.2 25.2" fill="none" stroke="#414a54" stroke-width="3.0" stroke-linecap="butt" stroke-linejoin="round"/><path d="M738 25.2C739.2 10.5 752 10.5 753.2 25.2" fill="none" stroke="#f6f6f4" stroke-width="1.3" stroke-linecap="butt" stroke-linejoin="round"/>
<path d="M743.6 21.3Q747.4 20 747.2 22.3Q747 23.9 745.2 24Q747.6 24.2 747.5 26Q747.2 28.3 743.4 27.2" fill="none" stroke="#414a54" stroke-width="1.5"/>
<rect x="735.4" y="6.9" width="5.2" height="5.2" fill="url(#yg)" stroke="#5c4c00" stroke-width="0.8"/>
<rect x="750.6" y="6.9" width="5.2" height="5.2" fill="url(#yg)" stroke="#5c4c00" stroke-width="0.8"/>
<circle cx="738" cy="25.2" r="3.3" fill="url(#yg)" stroke="#5c4c00" stroke-width="0.8"/>
<circle cx="753.2" cy="25.2" r="3.3" fill="url(#yg)" stroke="#5c4c00" stroke-width="0.8"/>
<circle cx="778.8" cy="18" r="3.1" fill="url(#yg)" stroke="#5c4c00" stroke-width="0.8"/>
<rect x="812.5" y="3.5" width="31" height="30" rx="3" fill="#dcdcda" stroke="#b9b9b7"/>
<rect x="845.5" y="3.5" width="31" height="30" rx="3" fill="#dcdcda" stroke="#b9b9b7"/>
<rect x="977.5" y="3.5" width="31" height="30" rx="3" fill="#dcdcda" stroke="#b9b9b7"/>
<rect x="1010.5" y="3.5" width="31" height="30" rx="3" fill="#dcdcda" stroke="#b9b9b7"/>
<rect x="1142.5" y="3.5" width="31" height="30" rx="3" fill="#dcdcda" stroke="#b9b9b7"/>
<rect x="1175.5" y="3.5" width="31" height="30" rx="3" fill="#dcdcda" stroke="#b9b9b7"/>
<rect x="1208.5" y="3.5" width="31" height="30" rx="3" fill="#dcdcda" stroke="#b9b9b7"/>
<path d="M823.4 17V13.6A4.6 4.6 0 0 1 832.6 13.6V17" fill="none" stroke="#0a6a70" stroke-width="3.4"/><path d="M823.4 17V13.6A4.6 4.6 0 0 1 832.6 13.6V17" fill="none" stroke="#25cfd6" stroke-width="1.8"/>
<rect x="820.6" y="16.8" width="14.9" height="11.6" rx="1.2" fill="url(#tg)" stroke="#0a6a70" stroke-width="0.9"/><path d="M822.5 20.4H833.5M822.5 23H833.5M822.5 25.6H833.5" stroke="#0e9aa2" stroke-width="0.8"/>
<path d="M871.2 9.4L857 21.2" fill="none" stroke="#0a6a70" stroke-width="4.8" stroke-linecap="butt"/><path d="M871.2 9.4L857 21.2" fill="none" stroke="#22cbd2" stroke-width="3.5" stroke-linecap="butt"/>
<circle cx="855.2" cy="22.6" r="4.1" fill="url(#tg)" stroke="#0a6a70" stroke-width="0.9"/>
<path d="M904 8.8L884.6 26.2" fill="none" stroke="#0a6a70" stroke-width="4.8" stroke-linecap="butt"/><path d="M904 8.8L884.6 26.2" fill="none" stroke="#22cbd2" stroke-width="3.5" stroke-linecap="butt"/>
<circle cx="894.2" cy="17.6" r="4.9" fill="url(#tg)" stroke="#0a6a70" stroke-width="0.9"/>
<circle cx="927" cy="17.8" r="8" fill="#fff" stroke="#0a6a70" stroke-width="4.6"/><circle cx="927" cy="17.8" r="8" fill="none" stroke="#22cbd2" stroke-width="3.3"/><circle cx="927" cy="17.8" r="3.7" fill="url(#tg)" stroke="#0a6a70" stroke-width="0.9"/>
<circle cx="960" cy="18" r="7.7" fill="none" stroke="#0c8088" stroke-width="1.7"/>
<circle cx="960" cy="10.2" r="3.4" fill="url(#tg)" stroke="#0a6a70" stroke-width="0.9"/>
<circle cx="960" cy="25.8" r="3.4" fill="url(#tg)" stroke="#0a6a70" stroke-width="0.9"/>
<circle cx="952.2" cy="18" r="3.4" fill="url(#tg)" stroke="#0a6a70" stroke-width="0.9"/>
<circle cx="967.8" cy="18" r="3.4" fill="url(#tg)" stroke="#0a6a70" stroke-width="0.9"/>
<path d="M984.6 10L1001.8 26.4M1001.8 10L984.6 26.4" fill="none" stroke="#0a6a70" stroke-width="5.6" stroke-linecap="butt"/><path d="M984.6 10L1001.8 26.4M1001.8 10L984.6 26.4" fill="none" stroke="#22cbd2" stroke-width="4.3" stroke-linecap="butt"/>
<path d="M1025.6 10.4V22.4M1015.2 23.6H1036.8" fill="none" stroke="#0a6a70" stroke-width="4.8" stroke-linecap="butt"/><path d="M1025.6 10.4V22.4M1015.2 23.6H1036.8" fill="none" stroke="#22cbd2" stroke-width="3.5" stroke-linecap="butt"/>
<circle cx="1051.2" cy="18" r="2.7" fill="url(#tg)" stroke="#0a6a70" stroke-width="0.9"/>
<circle cx="1058.8" cy="18" r="2.7" fill="url(#tg)" stroke="#0a6a70" stroke-width="0.9"/>
<circle cx="1066.4" cy="18" r="2.7" fill="url(#tg)" stroke="#0a6a70" stroke-width="0.9"/>
<path d="M1088.2 9.8L1101.8 18.4M1082.8 17.6L1096.4 26.2" fill="none" stroke="#0a6a70" stroke-width="4.7" stroke-linecap="butt"/><path d="M1088.2 9.8L1101.8 18.4M1082.8 17.6L1096.4 26.2" fill="none" stroke="#22cbd2" stroke-width="3.4" stroke-linecap="butt"/>
<g stroke="#0a6a70" stroke-width="0.9" stroke-linejoin="round"><path d="M1121 12.4L1126 7.8L1135.8 7.8L1135.8 19.6L1131 24.4L1121 24.4Z" fill="#1fc3cb"/><path d="M1121 12.4H1131V24.4M1131 12.4L1135.8 7.8" fill="none"/><path d="M1131 12.4L1135.8 7.8V19.6L1131 24.4Z" fill="#0f9aa2"/></g>
<circle cx="1119.3" cy="23.7" r="4.5" fill="url(#tg)" stroke="#0a6a70" stroke-width="0.9"/>
<path d="M1148.8 16.4L1162.8 25.2" fill="none" stroke="#0a6a70" stroke-width="4.7" stroke-linecap="butt"/><path d="M1148.8 16.4L1162.8 25.2" fill="none" stroke="#22cbd2" stroke-width="3.4" stroke-linecap="butt"/>
<circle cx="1161.8" cy="11.8" r="3.5" fill="url(#tg)" stroke="#0a6a70" stroke-width="0.9"/>
<path d="M1190.8 10.4V25.6M1183.2 18H1198.4" fill="none" stroke="#0a6a70" stroke-width="4.5" stroke-linecap="butt"/><path d="M1190.8 10.4V25.6M1183.2 18H1198.4" fill="none" stroke="#22cbd2" stroke-width="3.2" stroke-linecap="butt"/>
<path d="M1219.3 8V28M1228.8 8V28M1214 13H1234.6M1214 22.8H1234.6" fill="none" stroke="#0a6a70" stroke-width="3.3" stroke-linecap="butt"/><path d="M1219.3 8V28M1228.8 8V28M1214 13H1234.6M1214 22.8H1234.6" fill="none" stroke="#22cbd2" stroke-width="2.0" stroke-linecap="butt"/>
<rect x="1246.2" y="7.8" width="30" height="20.6" fill="url(#tg)" stroke="#0a6a70" stroke-width="0.9"/><circle cx="1252.8" cy="20.8" r="3.3" fill="#25cfd6" stroke="#0a6a70" stroke-width="1"/>
<path d="M24.4 55.4L24.4 50.1L21.9 50.1L25.9 45.7L29.9 50.1L27.4 50.1L27.4 55.4L27.4 55.4L32.7 55.4L32.7 52.9L37.1 56.9L32.7 60.9L32.7 58.4L27.4 58.4L27.4 58.4L27.4 63.7L29.9 63.7L25.9 68.1L21.9 63.7L24.4 63.7L24.4 58.4L24.4 58.4L19.1 58.4L19.1 60.9L14.7 56.9L19.1 52.9L19.1 55.4L24.4 55.4Z" fill="url(#bl)" stroke="#16325a" stroke-width="0.9" stroke-linejoin="round" />
<path d="M56.2 54.0L56.2 49.5L54.1 49.5L57.4 45.8L60.7 49.5L58.6 49.5L58.6 54.0L58.6 54.0L63.1 54.0L63.1 51.9L66.8 55.2L63.1 58.5L63.1 56.4L58.6 56.4L58.6 56.4L58.6 60.9L60.7 60.9L57.4 64.6L54.1 60.9L56.2 60.9L56.2 56.4L56.2 56.4L51.7 56.4L51.7 58.5L48.0 55.2L51.7 51.9L51.7 54.0L56.2 54.0Z" fill="url(#bl)" stroke="#16325a" stroke-width="0.9" stroke-linejoin="round" />
<path d="M61.3 58.7L61.3 55.1L59.4 55.1L62.4 51.8L65.4 55.1L63.5 55.1L63.5 58.7L63.5 58.7L67.1 58.7L67.1 56.8L70.4 59.8L67.1 62.8L67.1 60.9L63.5 60.9L63.5 60.9L63.5 64.5L65.4 64.5L62.4 67.8L59.4 64.5L61.3 64.5L61.3 60.9L61.3 60.9L57.7 60.9L57.7 62.8L54.4 59.8L57.7 56.8L57.7 58.7L61.3 58.7Z" fill="url(#bl)" stroke="#16325a" stroke-width="0.9" stroke-linejoin="round" />
<path d="M84.6 54.6A8 8 0 1 0 95.5 51" fill="none" stroke="#16325a" stroke-width="4.6" stroke-linecap="butt"/><path d="M84.6 54.6A8 8 0 1 0 95.5 51" fill="none" stroke="#3f76bb" stroke-width="2.9"/>
<path d="M88.2 49.4L97.6 46.2L97.2 55.6Z" fill="url(#bl)" stroke="#16325a" stroke-width="0.9" stroke-linejoin="round" />
<g stroke="#16325a" stroke-width="0.9" stroke-linejoin="round">
<path d="M118.6 49.8Q124.6 44.2 130.6 49.8L132.4 56.4Q131.8 63.6 127.6 66.4Q124.6 68 121.6 66.4Q117.4 63.6 116.8 56.4Z" fill="url(#bl)"/>
<path d="M117.8 52.4Q113.4 54.8 113.8 60.2Q116.6 59.4 118.2 56Z" fill="url(#bl)"/>
<path d="M131.4 52.4Q135.8 54.8 135.4 60.2Q132.6 59.4 131 56Z" fill="url(#bl)"/>
</g>
<ellipse cx="123" cy="56.8" rx="2.2" ry="1.7" fill="#fff"/><ellipse cx="127.4" cy="56.8" rx="2" ry="1.6" fill="#fff"/>
<circle cx="123.6" cy="57" r="0.9" fill="#111"/><circle cx="127" cy="57" r="0.9" fill="#111"/>
<path d="M123.2 64.2Q124.6 65.2 126 64.2" stroke="#122" stroke-width="0.8" fill="none"/>
<g stroke="#16325a" stroke-width="0.9" stroke-linejoin="round">
<path d="M147 50.232L156.156 47.6L168.8 49.856L168.8 63.016000000000005L158.99 66.4L147 64.144Z" fill="url(#bl)"/>
<path d="M147 50.232L158.99 52.676L168.8 49.856L156.156 47.6Z" fill="#6298d8"/>
<path d="M158.99 52.676L168.8 49.856L168.8 63.016000000000005L158.99 66.4Z" fill="#2a5796"/>
</g>
<g stroke="#16325a" stroke-width="0.9" stroke-linejoin="round">
<path d="M182.4 51.728L189.624 49.6L199.6 51.424L199.6 62.06399999999999L191.86 64.8L182.4 62.976Z" fill="url(#bl)"/>
<path d="M182.4 51.728L191.86 53.704L199.6 51.424L189.624 49.6Z" fill="#6298d8"/>
<path d="M191.86 53.704L199.6 51.424L199.6 62.06399999999999L191.86 64.8Z" fill="#2a5796"/>
</g>
<path d="M184 48.4H180.5V65.6H184M198 48.4H201.5V65.6H198" fill="none" stroke="#2a2e32" stroke-width="1.4"/>
<path d="M230.4 52.2L234.8 47.6H248V58Q247.6 65.4 239 66" fill="none" stroke="#16325a" stroke-width="3.5" stroke-linecap="round" stroke-linejoin="round"/><path d="M230.4 52.2L234.8 47.6H248V58Q247.6 65.4 239 66" fill="none" stroke="#4a80c4" stroke-width="2" stroke-linecap="round" stroke-linejoin="round"/><path d="M235.6 55.8Q239.4 51.4 243.2 54.8Q244.4 59.4 238.6 60.8" fill="none" stroke="#16325a" stroke-width="3.1" stroke-linecap="round"/><path d="M235.6 55.8Q239.4 51.4 243.2 54.8Q244.4 59.4 238.6 60.8" fill="none" stroke="#4a80c4" stroke-width="1.6" stroke-linecap="round"/>
<path d="M263.4 52.2L267.8 47.6H281V58Q280.6 65.4 272 66" fill="none" stroke="#16325a" stroke-width="3.5" stroke-linecap="round" stroke-linejoin="round"/><path d="M263.4 52.2L267.8 47.6H281V58Q280.6 65.4 272 66" fill="none" stroke="#4a80c4" stroke-width="2" stroke-linecap="round" stroke-linejoin="round"/><path d="M268.6 55.8Q272.4 51.4 276.2 54.8Q277.4 59.4 271.6 60.8" fill="none" stroke="#16325a" stroke-width="3.1" stroke-linecap="round"/><path d="M268.6 55.8Q272.4 51.4 276.2 54.8Q277.4 59.4 271.6 60.8" fill="none" stroke="#4a80c4" stroke-width="1.6" stroke-linecap="round"/>
<path d="M305.6 47.4V66.4" stroke="#16325a" stroke-width="3.2" stroke-linecap="round"/><path d="M305.6 47.4V66.4" stroke="#4a82c6" stroke-width="1.6" stroke-linecap="round"/>
<path d="M295.3 56.9L299.6 52.4V55.3H302.6V58.5H299.6V61.4Z" fill="url(#bl)" stroke="#16325a" stroke-width="0.9" stroke-linejoin="round" />
<path d="M316.6 56.9L312.3 52.4V55.3H309.3V58.5H312.3V61.4Z" fill="url(#bl)" stroke="#16325a" stroke-width="0.9" stroke-linejoin="round" />
<rect x="328.4" y="55.4" width="22" height="2.8" fill="#b6b8b8" stroke="#7a7c7c" stroke-width="0.7"/>
<path d="M338.5 56.9L334.2 52.4V55.3H330.6V58.5H334.2V61.4Z" fill="url(#bl)" stroke="#16325a" stroke-width="0.9" stroke-linejoin="round" />
<path d="M339.3 56.9L343.6 52.4V55.3H347.2V58.5H343.6V61.4Z" fill="url(#bl)" stroke="#16325a" stroke-width="0.9" stroke-linejoin="round" />
<rect x="361.2" y="55.4" width="22" height="2.8" fill="#b6b8b8" stroke="#7a7c7c" stroke-width="0.7"/>
<path d="M369.3 47.6V66.2" stroke="#16325a" stroke-width="3.4" stroke-linecap="round"/><path d="M369.3 47.6V66.2" stroke="#4a82c6" stroke-width="1.7" stroke-linecap="round"/>
<path d="M374.7 47.6V66.2" stroke="#16325a" stroke-width="3.4" stroke-linecap="round"/><path d="M374.7 47.6V66.2" stroke="#4a82c6" stroke-width="1.7" stroke-linecap="round"/>
<rect x="395.4" y="47.8" width="19.8" height="18.8" fill="none" stroke="#3465a4" stroke-width="2.4" stroke-dasharray="2.6 2"/>
<rect x="395.4" y="58.6" width="8.4" height="8.2" fill="#fff" stroke="#16325a" stroke-width="3"/><rect x="395.4" y="58.6" width="8.4" height="8.2" fill="#fff" stroke="#4a80c4" stroke-width="1.5"/>
<path d="M405.6 56.4L409.6 52.8" stroke="#16325a" stroke-width="3.4"/><path d="M407.6 49.8L412.6 49.6L412.4 54.6Z" fill="#3f76bb" stroke="#16325a" stroke-width="0.9" stroke-linejoin="round"/><path d="M405.6 56.4L410 52.4" stroke="#4a80c4" stroke-width="1.8"/>
<rect x="428.8" y="47.8" width="9.6" height="18" fill="#f2f4f8" stroke="#16325a" stroke-width="3.2"/><rect x="428.8" y="47.8" width="9.6" height="18" fill="none" stroke="#3f76bb" stroke-width="1.6"/>
<path d="M440.6 50.4L448.4 66H440.6" fill="none" stroke="#2f62a6" stroke-width="2" stroke-dasharray="2.4 1.4"/>
<path d="M460.6 62.2L466.9 59.4L471.6 64.6L468.4 67.2Z" fill="none" stroke="#d81818" stroke-width="2" stroke-linejoin="round"/><ellipse cx="476.2" cy="62.6" rx="5.2" ry="3.4" fill="none" stroke="#d81818" stroke-width="2"/>
<path d="M460.6 52L469 46.6L473.2 49.4L465.8 53.8Z" fill="none" stroke="#3a6fb4" stroke-width="1.8" stroke-linejoin="round"/><ellipse cx="476" cy="51" rx="5.2" ry="3.5" fill="none" stroke="#3a6fb4" stroke-width="1.8"/><ellipse cx="476" cy="51" rx="2.2" ry="1.3" fill="none" stroke="#6a97d0" stroke-width="0.8"/>
<path d="M464.8 61V57H463L466.3 52.6L469.6 57H467.8V61Z" fill="url(#bl)" stroke="#16325a" stroke-width="0.9" stroke-linejoin="round" />
<path d="M473.9 53.2V58H472.1L475.4 62.4L478.7 58H476.9V53.2Z" fill="url(#bl)" stroke="#16325a" stroke-width="0.9" stroke-linejoin="round" />
<path d="M520 46.6L529.8 56.4H524.8V67.6H515.2V56.4H510.2Z" fill="url(#bl)" stroke="#16325a" stroke-width="0.9" stroke-linejoin="round" />
<path d="M552.8 67.8L562.6 58H557.6V46.6H548V58H543Z" fill="url(#bl)" stroke="#16325a" stroke-width="0.9" stroke-linejoin="round" />
<path d="M583 47H588.6V54.2H596.4V59.8H588.6V67H583V59.8H575.2V54.2H583Z" fill="#b4b6b4" stroke="#8e908e" stroke-width="0.9"/>
<rect x="608.6" y="54.6" width="20.8" height="4.7" rx="0.4" fill="url(#bl)" stroke="#16325a" stroke-width="0.9"/>
<rect x="657.8" y="46.9" width="5.4" height="8.6" rx="0.6" fill="url(#bl)" stroke="#16325a" stroke-width="1.1"/>
<rect x="665.3" y="46.9" width="5.4" height="8.6" rx="0.6" fill="url(#bl)" stroke="#16325a" stroke-width="1.1"/>
<rect x="672.8" y="46.9" width="5.4" height="8.6" rx="0.6" fill="url(#bl)" stroke="#16325a" stroke-width="1.1"/>
<rect x="657.8" y="58.5" width="5.4" height="8.6" rx="0.6" fill="url(#bl)" stroke="#16325a" stroke-width="1.1"/>
<rect x="665.3" y="58.5" width="5.4" height="8.6" rx="0.6" fill="url(#bl)" stroke="#16325a" stroke-width="1.1"/>
<rect x="672.8" y="58.5" width="5.4" height="8.6" rx="0.6" fill="url(#bl)" stroke="#16325a" stroke-width="1.1"/>
<path d="M694.8 63C701.5 62 699.5 51 707.4 50.4" fill="none" stroke="#777" stroke-width="3"/><path d="M694.8 63C701.5 62 699.5 51 707.4 50.4" fill="none" stroke="#e4e4e4" stroke-width="1.2"/>
<rect x="690.3" y="58.8" width="4.4" height="8.6" rx="0.6" fill="url(#bl)" stroke="#16325a" stroke-width="1.1"/>
<rect x="707.4" y="46.2" width="4.4" height="8.4" rx="0.6" fill="url(#bl)" stroke="#16325a" stroke-width="1.1"/>
<rect x="696.6" y="54.5" width="8.6" height="4.2" rx="0.6" fill="url(#bl)" stroke="#16325a" stroke-width="1.1"/>
<path d="M728 64L725.8 52.6M728 64L733 54.5M728 64L738 60M728 64.6H739" stroke="#8a8a8a" stroke-width="0.8" stroke-dasharray="1.8 1.2" fill="none"/>
<rect x="723.2" y="46.8" width="5.2" height="5.2" rx="0.6" fill="url(#bl)" stroke="#16325a" stroke-width="1.1"/>
<rect x="731.2" y="49.4" width="5.2" height="5.2" rx="0.6" fill="url(#bl)" stroke="#16325a" stroke-width="1.1"/>
<rect x="737.4" y="55.2" width="5.2" height="5.2" rx="0.6" fill="url(#bl)" stroke="#16325a" stroke-width="1.1"/>
<rect x="738.9" y="62.4" width="5.2" height="5.2" rx="0.6" fill="url(#bl)" stroke="#16325a" stroke-width="1.1"/>
<rect x="756.8" y="46.9" width="5.6" height="8.6" rx="0.6" fill="url(#bl)" stroke="#16325a" stroke-width="1.1"/>
<rect x="771.7" y="46.9" width="5.6" height="8.6" rx="0.6" fill="url(#bl)" stroke="#16325a" stroke-width="1.1"/>
<rect x="764.4" y="58.4" width="5.4" height="9" rx="0.6" fill="url(#bl)" stroke="#16325a" stroke-width="1.1"/>
<g stroke="#777977" stroke-width="0.9" stroke-linejoin="round"><path d="M792.6 47.2L806.4 48.4V62.6L792.6 61Z" fill="#bfc1bf"/><path d="M806 52.4H810.6V59H806" fill="none" stroke-width="1.6"/><path d="M789.4 51.6L803 53.2V66.4L789.4 64.6Z" fill="#a4a6a4"/><path d="M803 53.2L806.4 51V62.6L803 66.4Z" fill="#8c8e8c"/></g>
<path d="M829.4 49L829.4 63.8H821.8Z" fill="url(#bl)" stroke="#16325a" stroke-width="0.9" stroke-linejoin="round" />
<path d="M836.2 49L836.2 63.8H843.8Z" fill="url(#bl)" stroke="#16325a" stroke-width="0.9" stroke-linejoin="round" />
<path d="M832.9 45.8V68" stroke="#3a72c0" stroke-width="3" stroke-dasharray="2.8 1.2"/>
<g stroke="#16325a" stroke-width="0.9" stroke-linejoin="round">
<path d="M855.3 60.1L863.9 56.4L876.1 56.9L867.6 62.8Z" fill="#2e5c9e"/>
<path d="M855.3 60.1L867.6 62.8V67.6L855.3 66.5Z" fill="#4a82c6"/>
<path d="M867.6 62.8L876.1 56.9V62.2L867.6 67.6Z" fill="#2a5796"/>
<path d="M863.3 59.8V52.7H858.5L865.6 46L872.9 52.7H868.1V59.8Z" fill="#4a82c6"/></g>
<circle cx="894.7" cy="60.1" r="6.7" fill="url(#bl)" stroke="#16325a" stroke-width="0.9"/><circle cx="902.2" cy="54.4" r="6.9" fill="url(#docg)" stroke="#6a6c6a" stroke-width="0.9"/>
<circle cx="928" cy="60.2" r="7" fill="url(#bl)" stroke="#16325a" stroke-width="0.9"/><circle cx="935.8" cy="54" r="6.7" fill="url(#bl)" stroke="#16325a" stroke-width="0.9"/><path d="M929.4 53.2L934.8 61" stroke="#3f74b8" stroke-width="3.4"/>
<circle cx="960.8" cy="60.1" r="7" fill="url(#docg)" stroke="#6a6c6a" stroke-width="0.9"/><circle cx="968.3" cy="54.3" r="7" fill="url(#docg)" stroke="#6a6c6a" stroke-width="0.9"/>
<path d="M961.4 53.2A7 7 0 0 1 967.7 61.2A7 7 0 0 1 961.4 53.2Z" fill="#3f76bb" stroke="#16325a" stroke-width="0.9"/><circle cx="960.8" cy="60.1" r="7" fill="none" stroke="#6a6c6a" stroke-width="0.9"/>
<path d="M1009.6 52.2L1022 64.6" stroke="#4a4e50" stroke-width="5" stroke-linecap="round"/><path d="M1009.6 52.2L1022 64.6" stroke="#9a9e9e" stroke-width="3.2" stroke-linecap="round"/>
<path d="M1004 50.4Q1003.6 46.6 1007.6 46L1007.2 49.2L1009.6 50.4L1011.6 47.6Q1013.6 51.4 1010.4 54Q1006 55.4 1004 50.4Z" fill="#9a9e9e" stroke="#4a4e50" stroke-width="0.9" stroke-linejoin="round"/>
<path d="M1020.6 50L1014.6 56.4" stroke="#4a4e50" stroke-width="3.4" stroke-linecap="round"/><path d="M1020.6 50L1014.6 56.4" stroke="#b4b8b8" stroke-width="1.8" stroke-linecap="round"/>
<path d="M1019.4 49.2L1022.8 46.4L1024.4 48.2L1021.8 51.6Z" fill="#a8acac" stroke="#4a4e50" stroke-width="0.8" stroke-linejoin="round"/>
<path d="M1013.4 57.6L1006.2 64.8" stroke="#16325a" stroke-width="5.6" stroke-linecap="round"/><path d="M1013.4 57.6L1006.2 64.8" stroke="#3f76bb" stroke-width="3.8" stroke-linecap="round"/>
<rect x="1037.6" y="48" width="18" height="16.6" fill="#fafafa" stroke="#8a8c8a" stroke-width="0.9"/><path d="M1042 48V64.6M1046.6 48V64.6M1051.2 48V64.6M1037.6 52.2H1055.6M1037.6 56.4H1055.6M1037.6 60.6H1055.6" stroke="#d6d8d6" stroke-width="0.6"/><path d="M1040.2 54V62H1049.6M1040.2 54L1039 56M1040.2 54L1041.4 56M1049.6 62L1047.6 60.8M1049.6 62L1047.6 63.2" stroke="#444" stroke-width="0.8" fill="none"/>
<defs><linearGradient id="hw" x1="0" y1="0" x2="1" y2="1"><stop offset="0" stop-color="#dededc"/><stop offset="1" stop-color="#8e908e"/></linearGradient></defs>
<g stroke="#3c3e3c" stroke-width="0.9" stroke-linejoin="round"><path d="M1068.9 53.7L1076.4 47.1L1081.1 55.3V67.6L1069.4 64.9Z" fill="#fafaf8"/><path d="M1076.4 47.1L1085.9 46.5L1091 52.7L1081.1 55.3Z" fill="#ececea"/><path d="M1081.1 55.3L1091 52.7V61.2L1081.1 67.6Z" fill="url(#hw)"/><path d="M1072.8 65.6V57.6L1077.2 58.4V66.6" fill="#8a8c8a"/><path d="M1074.4 66V59.2L1077.2 59.6" fill="#dcdcda" stroke-width="0.5"/></g>
<path d="M1105.2 46.4H1117.4L1121.4 50.4V67.8H1105.2Z" fill="url(#docg)" stroke="#5e605e" stroke-width="0.9" stroke-linejoin="round"/><path d="M1117.4 46.4V50.4H1121.4" fill="#f8f8f8" stroke="#5e605e" stroke-width="0.8" stroke-linejoin="round"/><path d="M1107.4 49.4H1114.6V54H1118.6V65.6H1107.4ZM1110.6 49.4V58H1114.8V54M1110.6 58V65.6M1114.8 58V62H1118.6M1110.6 61.6H1114.8" fill="none" stroke="#5a5c5a" stroke-width="1"/>
<path d="M1138 46.4H1150.2L1154.2 50.4V67.8H1138Z" fill="url(#docg)" stroke="#5e605e" stroke-width="0.9" stroke-linejoin="round"/><path d="M1150.2 46.4V50.4H1154.2" fill="#f8f8f8" stroke="#5e605e" stroke-width="0.8" stroke-linejoin="round"/><path d="M1142 52.4L1145 51.4L1148.4 52.4V57L1145 58L1142 57Z" fill="#d8141c" stroke="#8a0a10" stroke-width="0.6"/><path d="M1139.6 58.4L1145.4 57.6V63.4L1139.6 63.8Z" fill="#2a6cc0"/><path d="M1145.4 57.6L1152.6 57.2V62.6L1145.4 63.4Z" fill="#2a98b8"/>
<path d="M1170.8 46.4H1183.0L1187.0 50.4V67.8H1170.8Z" fill="url(#docg)" stroke="#5e605e" stroke-width="0.9" stroke-linejoin="round"/><path d="M1183.0 46.4V50.4H1187.0" fill="#f8f8f8" stroke="#5e605e" stroke-width="0.8" stroke-linejoin="round"/><rect x="1173.6" y="54.4" width="2.8" height="10.4" fill="#2a6cc0"/><rect x="1178" y="50.4" width="2.8" height="14.4" fill="#d8141c"/><rect x="1182.4" y="58" width="2.8" height="6.8" fill="#2a98b8"/>
<path d="M1203.6 46.4H1215.8L1219.8 50.4V67.8H1203.6Z" fill="url(#docg)" stroke="#5e605e" stroke-width="0.9" stroke-linejoin="round"/><path d="M1215.8 46.4V50.4H1219.8" fill="#f8f8f8" stroke="#5e605e" stroke-width="0.8" stroke-linejoin="round"/><path d="M1209 54.6L1205.8 57.8L1209 61" fill="none" stroke="#2a6cc0" stroke-width="1.6"/><path d="M1214.8 54.6L1218 57.8L1214.8 61" fill="none" stroke="#2a98b8" stroke-width="1.6"/><path d="M1213 53.4L1210.6 62.2" stroke="#d8141c" stroke-width="1.5"/>
<path d="M1236.4 46.4H1248.6000000000001L1252.6000000000001 50.4V67.8H1236.4Z" fill="url(#docg)" stroke="#5e605e" stroke-width="0.9" stroke-linejoin="round"/><path d="M1248.6000000000001 46.4V50.4H1252.6000000000001" fill="#f8f8f8" stroke="#5e605e" stroke-width="0.8" stroke-linejoin="round"/><path d="M1242.6 50.2L1250.6 51.6V62.6L1242.6 61Z" fill="#e8243c"/><path d="M1245 52.6L1248.4 53.2V60.4" fill="none" stroke="#f47888" stroke-width="0.8"/><path d="M1238.6 55.6L1246 54.2V65.4L1238.6 66.4Z" fill="#2a6cc0"/>
<path fill-rule="evenodd" fill="#ff0000" d="M-3 -3H98V37H-3ZM4 4V29.8H90V4Z"/>
<path fill-rule="evenodd" fill="#ff0000" d="M620.8 -3H668.8V39.2H620.8ZM628.1 4V31.9H661.1V4Z"/>
</svg>
<div class="t" style="left:47.3px;top:11.7px;font-size:13px;letter-spacing:-0.234px;color:#000;">Top</div>
<div class="t" style="left:113.3px;top:11.7px;font-size:13px;letter-spacing:0.448px;color:#000;">2px | 3.50 mm</div>
<div class="t" style="left:269.6px;top:11.7px;font-size:13px;letter-spacing:0.059px;color:#000;">None</div>
</body></html>
